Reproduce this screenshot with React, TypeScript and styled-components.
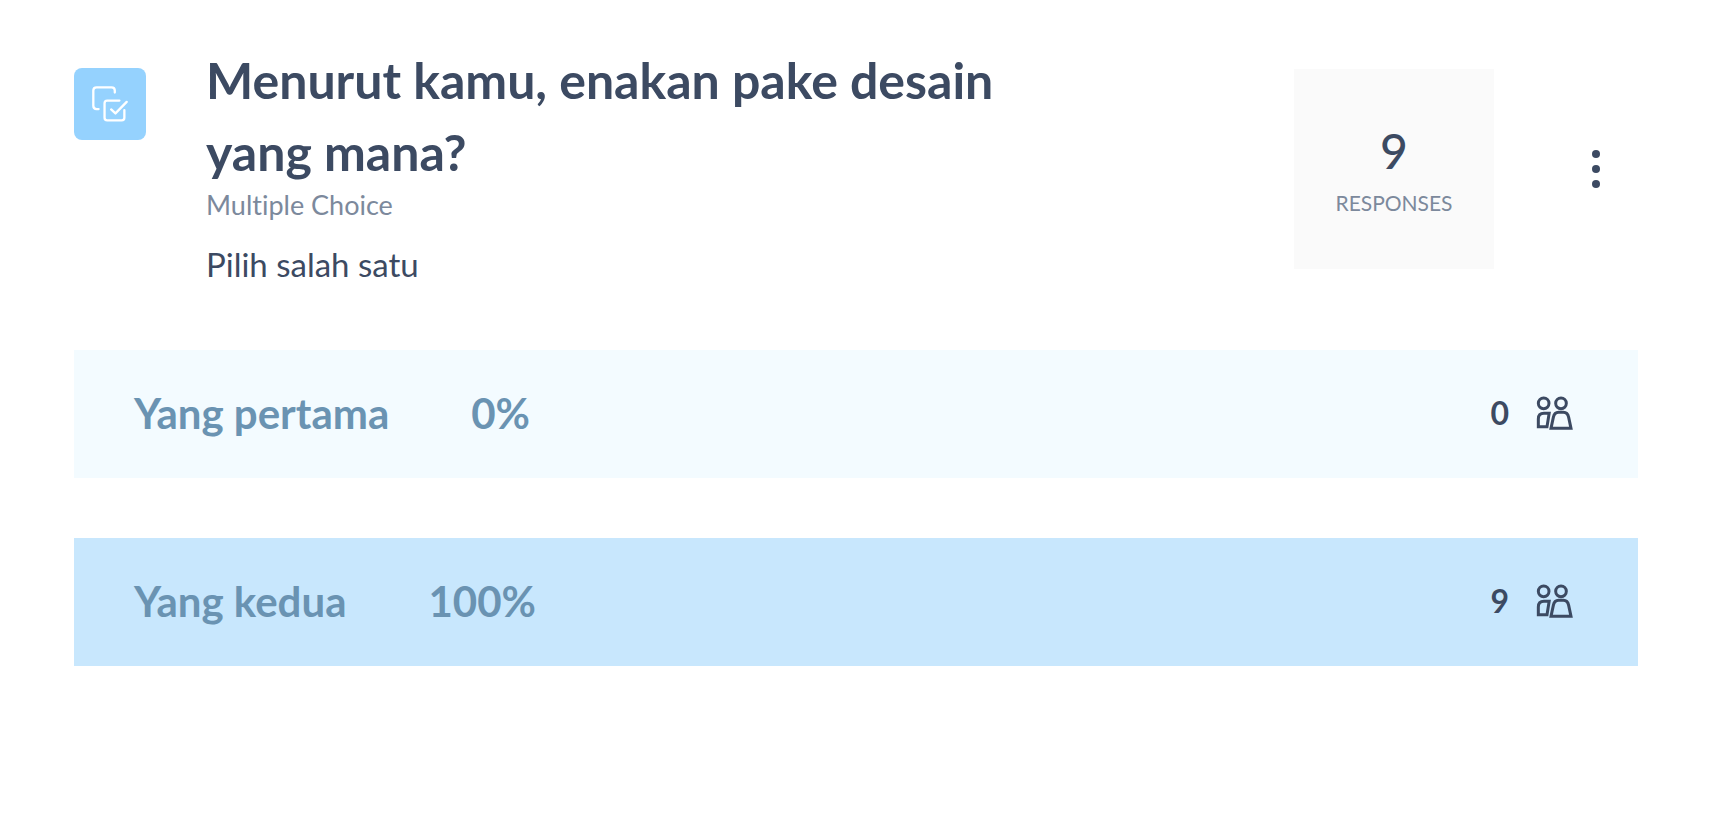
import React from "react";
import styled, { createGlobalStyle } from "styled-components";

const GlobalStyle = createGlobalStyle`
  *, *::before, *::after { box-sizing: border-box; }
  body {
    margin: 0;
    background: #ffffff;
    color: #3c4a62;
    font-family: Lato, "Liberation Sans", sans-serif;
    font-variant-ligatures: none;
  }
`;

const Page = styled.main`
  padding: 44px 74px;
`;

const Header = styled.header`
  display: flex;
  align-items: flex-start;
`;

const TypeBadge = styled.div`
  display: flex;
  flex: none;
  align-items: center;
  justify-content: center;
  width: 72px;
  height: 72px;
  margin-top: 24px;
  border-radius: 8px;
  background: #95d2fe;
`;

const Question = styled.div`
  flex: 1;
  min-width: 0;
  padding: 0 60px;
`;

const Title = styled.h1`
  max-width: 860px;
  margin: 0;
  font-size: 50px;
  font-weight: 700;
  line-height: 72px;
`;

const QuestionType = styled.p`
  margin: 0;
  color: #7c899c;
  font-size: 27px;
  line-height: 34px;
`;

const Description = styled.p`
  margin: 18px 0 0;
  font-size: 33px;
  line-height: 48px;
`;

const Summary = styled.div`
  display: flex;
  flex: none;
  align-items: center;
  gap: 80px;
  margin: 25px 20px 0 0;
`;

const ResponseCard = styled.div`
  display: flex;
  flex-direction: column;
  align-items: center;
  justify-content: center;
  gap: 4px;
  width: 200px;
  height: 200px;
  padding-top: 3px;
  background: #fafafa;
`;

const ResponseCount = styled.span`
  font-size: 48px;
  font-weight: 500;
  line-height: 60px;
`;

const ResponseLabel = styled.span`
  color: #7c899c;
  font-size: 21px;
  line-height: 36px;
`;

const MenuButton = styled.button`
  display: flex;
  align-items: center;
  justify-content: center;
  width: 44px;
  height: 60px;
  padding: 0;
  border: 0;
  background: transparent;
  color: inherit;
  cursor: pointer;
`;

const Options = styled.ul`
  display: flex;
  flex-direction: column;
  gap: 60px;
  margin: 62px 0 0;
  padding: 0;
  list-style: none;
`;

const Option = styled.li<{ $chosen: boolean }>`
  display: flex;
  align-items: center;
  height: 128px;
  padding: 0 64px 2px 60px;
  background: ${({ $chosen }) => ($chosen ? "#c8e7fd" : "#f3fbff")};
`;

const OptionText = styled.span`
  margin-right: 82px;
  color: #6a93b2;
  font-size: 42px;
  font-weight: 700;
  line-height: 60px;
`;

const Share = styled(OptionText)`
  margin-right: auto;
`;

const Votes = styled.span`
  display: flex;
  align-items: center;
  gap: 27px;
  font-size: 32px;
  font-weight: 700;
  line-height: 48px;
`;

const MultipleChoiceIcon = () => (
  <svg width="36" height="36" viewBox="0 0 109 109" fill="none" stroke="#fff" strokeWidth="7" strokeLinecap="round" strokeLinejoin="round" aria-hidden="true">
    <path d="M69 20V14Q69 4 59 4H14Q4 4 4 14V60Q4 70 14 70H20" />
    <path d="M83 44H46Q38 44 38 52V96Q38 104 46 104H90Q98 104 98 96V73" />
    <path d="M58 71L71 83L105 48" />
  </svg>
);

const PeopleIcon = () => (
  <svg width="38" height="34" viewBox="0 0 114 102" fill="none" stroke="currentColor" strokeWidth="9" aria-hidden="true">
    <circle cx="23" cy="22" r="16" />
    <circle cx="75" cy="22" r="16" />
    <path d="M7 92V69C7 58 13 52 24 52H39.5L33 92Z" />
    <path d="M45 97L52 64Q55 49 68 49H82Q95 49 98 64L105 97Z" />
  </svg>
);

const DotsIcon = () => (
  <svg width="8" height="38" viewBox="0 0 8 38" fill="currentColor" aria-hidden="true">
    <circle cx="4" cy="4" r="4" />
    <circle cx="4" cy="19" r="4" />
    <circle cx="4" cy="34" r="4" />
  </svg>
);

const options = [
  { label: "Yang pertama", votes: 0 },
  { label: "Yang kedua", votes: 9 },
];

export default function App() {
  const total = options.reduce((sum, option) => sum + option.votes, 0);

  return (
    <>
      <GlobalStyle />
      <Page>
        <Header>
          <TypeBadge>
            <MultipleChoiceIcon />
          </TypeBadge>
          <Question>
            <Title>Menurut kamu, enakan pake desain yang mana?</Title>
            <QuestionType>Multiple Choice</QuestionType>
            <Description>Pilih salah satu</Description>
          </Question>
          <Summary>
            <ResponseCard>
              <ResponseCount>{total}</ResponseCount>
              <ResponseLabel>RESPONSES</ResponseLabel>
            </ResponseCard>
            <MenuButton type="button" aria-label="Question menu">
              <DotsIcon />
            </MenuButton>
          </Summary>
        </Header>
        <Options>
          {options.map(({ label, votes }) => (
            <Option key={label} $chosen={votes > 0}>
              <OptionText>{label}</OptionText>
              <Share>{Math.round((votes / total) * 100)}%</Share>
              <Votes>
                {votes}
                <PeopleIcon />
              </Votes>
            </Option>
          ))}
        </Options>
      </Page>
    </>
  );
}
